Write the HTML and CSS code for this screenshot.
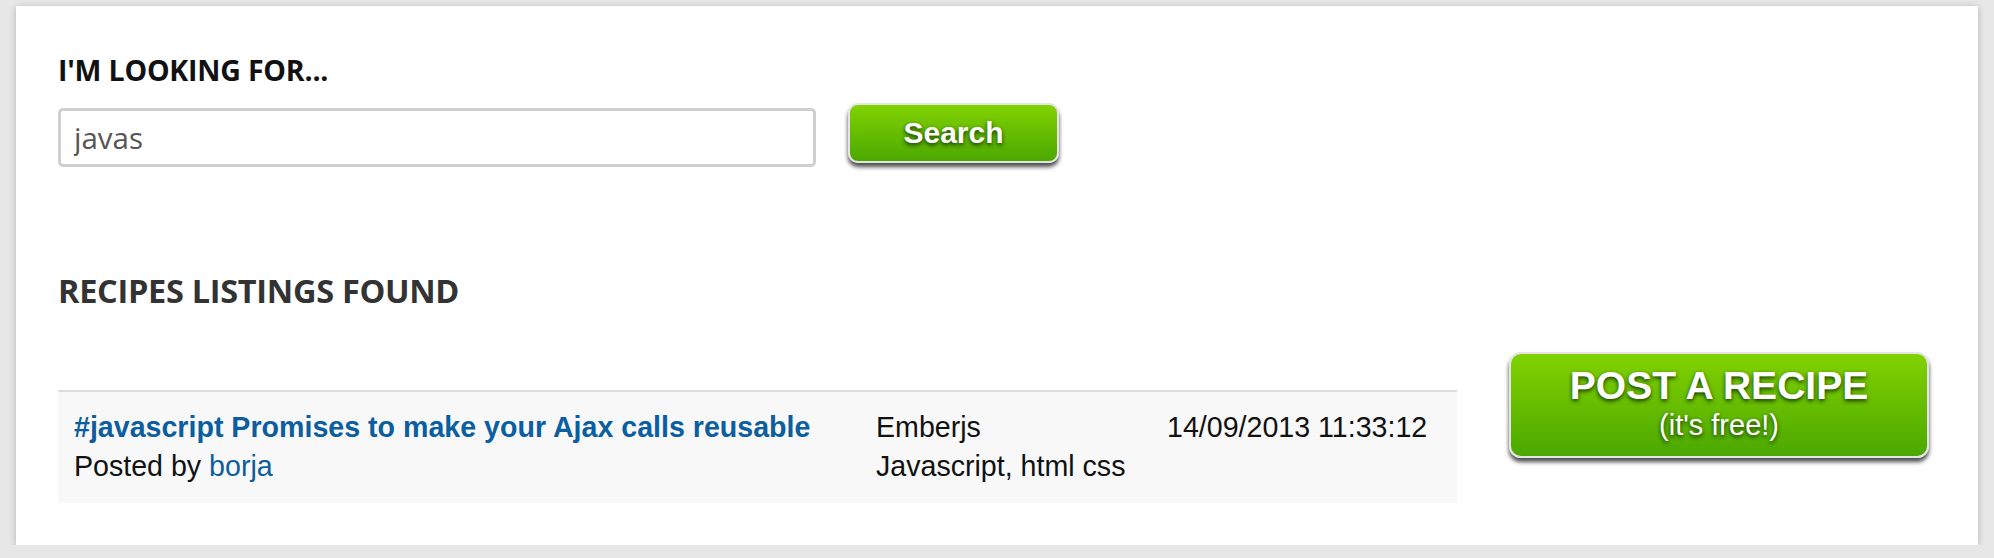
FILE: index.html
```html
<!DOCTYPE html>
<html>
<head>
<meta charset="utf-8">
<link rel="stylesheet" href="styles.css">
</head>
<body>
<div class="panel">
  <h2 class="title">I'M LOOKING FOR...</h2>
  <form class="search-row">
    <input class="search-input" type="text" value="javas">
    <button class="btn-green btn-search" type="button">Search</button>
  </form>
  <h2 class="title title-results">RECIPES LISTINGS FOUND</h2>
  <div class="results-row">
    <div class="listing">
      <div class="cell">
        <a class="recipe-link" href="#">#javascript Promises to make your Ajax calls reusable</a>
        <div>Posted by <a class="user-link" href="#">borja</a></div>
      </div>
      <div class="cell">
        <div>Emberjs</div>
        <div>Javascript, html css</div>
      </div>
      <div class="cell">
        <div>14/09/2013 11:33:12</div>
      </div>
    </div>
    <a class="btn-green btn-post" href="#">
      <span class="post-main">POST A RECIPE</span>
      <span class="post-sub">(it's free!)</span>
    </a>
  </div>
</div>
</body>
</html>
```
FILE: styles.css
```css
html, body {
  margin: 0;
  padding: 0;
}
body {
  background: #e7e7e7;
  padding: 6px 16px 0;
  font-family: "Liberation Sans", Arial, Helvetica, sans-serif;
}
.panel {
  background: #fff;
  box-shadow: 0 1px 7px rgba(0, 0, 0, 0.22);
  padding: 45px 42px 42px;
}
.title {
  margin: 0;
  font-family: "Open Sans", sans-serif;
  font-weight: 700;
  font-size: 28.5px;
  line-height: 38px;
  color: #111;
  letter-spacing: -0.2px;
}
.title-results {
  margin-top: 105px;
  font-size: 32.5px;
  letter-spacing: -0.3px;
  color: #333;
}
.search-row {
  display: flex;
  align-items: flex-start;
  margin: 14px 0 0;
}
.search-input {
  box-sizing: border-box;
  width: 758px;
  height: 59px;
  margin-top: 5px;
  border: 3px solid #cfcfcf;
  border-radius: 5px;
  padding: 0 13px;
  font-family: "Open Sans", sans-serif;
  font-size: 29.5px;
  color: #555;
  outline: none;
}
.btn-green {
  box-sizing: border-box;
  display: flex;
  flex-direction: column;
  align-items: center;
  justify-content: center;
  background: linear-gradient(to bottom, #82d200 0%, #4ba800 100%);
  border: 2px solid #e4e4e4;
  border-radius: 10px;
  box-shadow: 0 4px 4px rgba(0, 0, 0, 0.7);
  color: #fff;
  font-family: "Liberation Sans", Arial, Helvetica, sans-serif;
  font-weight: 700;
  text-decoration: none;
  text-shadow: 0 2px 4px rgba(0, 30, 0, 0.85);
}
.btn-search {
  width: 211px;
  height: 60px;
  margin-left: 32px;
  font-size: 30px;
  padding: 0;
}
.results-row {
  display: flex;
  align-items: flex-start;
  margin-top: 42px;
}
.listing {
  display: grid;
  grid-template-columns: 802px 291px 306px;
  margin-top: 38px;
  border-top: 2px solid #dcdcdc;
  background: #f8f8f8;
  padding: 16px 0 17px;
  font-size: 28.6px;
  line-height: 39px;
  color: #111;
}
.cell {
  padding-left: 16px;
}
.recipe-link {
  display: block;
  font-weight: 700;
  color: #0b5e9f;
  text-decoration: none;
}
.user-link {
  color: #0b5e9f;
  text-decoration: none;
}
.btn-post {
  width: 420px;
  height: 106px;
  margin-left: 52px;
  border-radius: 12px;
}
.post-main {
  font-size: 39px;
  line-height: 44px;
  margin-top: -5px;
}
.post-sub {
  font-size: 29px;
  line-height: 34px;
  font-weight: 400;
}
```
